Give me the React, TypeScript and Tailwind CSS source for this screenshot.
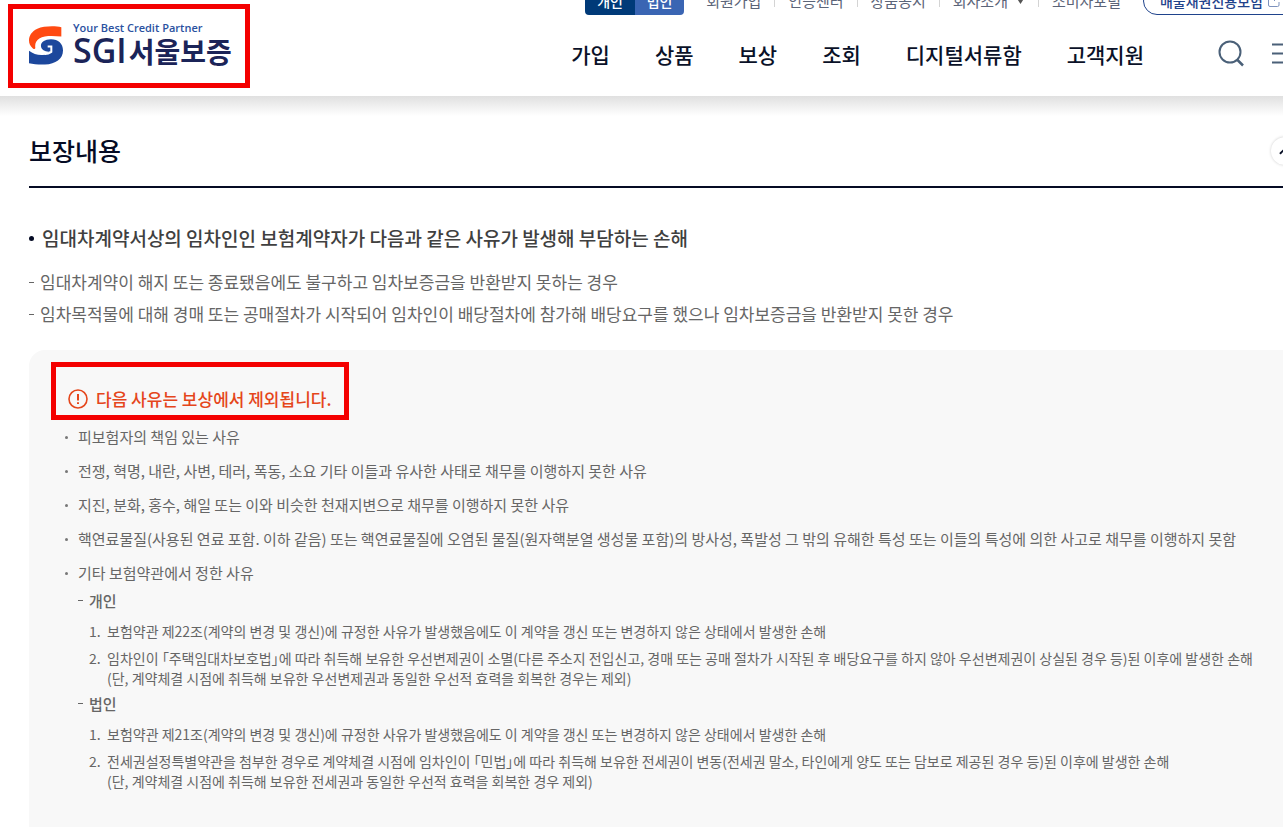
import { ChevronUp } from 'lucide-react'

type ClauseGroup = {
  title: string,
  clauses: string[][],
}

const menus = ['가입', '상품', '보상', '조회', '디지털서류함', '고객지원']

const utilLinks = [
  { label: '회원가입' },
  { label: '인증센터' },
  { label: '상품공시' },
  { label: '회사소개', hasMenu: true },
  { label: '소비자포털' },
]

const coverages = [
  '임대차계약이 해지 또는 종료됐음에도 불구하고 임차보증금을 반환받지 못하는 경우',
  '임차목적물에 대해 경매 또는 공매절차가 시작되어 임차인이 배당절차에 참가해 배당요구를 했으나 임차보증금을 반환받지 못한 경우',
]

const exclusions = [
  '피보험자의 책임 있는 사유',
  '전쟁, 혁명, 내란, 사변, 테러, 폭동, 소요 기타 이들과 유사한 사태로 채무를 이행하지 못한 사유',
  '지진, 분화, 홍수, 해일 또는 이와 비슷한 천재지변으로 채무를 이행하지 못한 사유',
  '핵연료물질(사용된 연료 포함. 이하 같음) 또는 핵연료물질에 오염된 물질(원자핵분열 생성물 포함)의 방사성, 폭발성 그 밖의 유해한 특성 또는 이들의 특성에 의한 사고로 채무를 이행하지 못함',
  '기타 보험약관에서 정한 사유',
]

const clauseGroups: ClauseGroup[] = [
  {
    title: '개인',
    clauses: [
      ['보험약관 제22조(계약의 변경 및 갱신)에 규정한 사유가 발생했음에도 이 계약을 갱신 또는 변경하지 않은 상태에서 발생한 손해'],
      [
        '임차인이 「주택임대차보호법」에 따라 취득해 보유한 우선변제권이 소멸(다른 주소지 전입신고, 경매 또는 공매 절차가 시작된 후 배당요구를 하지 않아 우선변제권이 상실된 경우 등)된 이후에 발생한 손해',
        '(단, 계약체결 시점에 취득해 보유한 우선변제권과 동일한 우선적 효력을 회복한 경우는 제외)',
      ],
    ],
  },
  {
    title: '법인',
    clauses: [
      ['보험약관 제21조(계약의 변경 및 갱신)에 규정한 사유가 발생했음에도 이 계약을 갱신 또는 변경하지 않은 상태에서 발생한 손해'],
      [
        '전세권설정특별약관을 첨부한 경우로 계약체결 시점에 임차인이 「민법」에 따라 취득해 보유한 전세권이 변동(전세권 말소, 타인에게 양도 또는 담보로 제공된 경우 등)된 이후에 발생한 손해',
        '(단, 계약체결 시점에 취득해 보유한 전세권과 동일한 우선적 효력을 회복한 경우 제외)',
      ],
    ],
  },
]

const Logo = () => (
  <a
    href="#"
    className="ml-2 mt-1 flex h-[84px] w-[242px] shrink-0 items-start border-[5px] border-[#f40000] pl-4 pt-3"
  >
    <svg viewBox="0 0 102 116" className="mt-[5px] h-[39px] w-[34px] shrink-0" aria-hidden="true">
      <path
        d="M97 3 C78 -1 44 -1 25 8 C8 16 0 29 0 43 C0 53 4 60 11 66 C16 70 19 69 19 65 C17 54 21 43 31 37 C46 28 70 29 97 31 Z"
        fill="#ff4a12"
      />
      <path
        d="M0 74 C13 84 29 88 45 86 L64 76 C50 78 38 72 36 61 C34 48 48 39 66 39 C88 39 102 52 102 73 C102 98 80 114 48 115 C31 116 14 114 0 111 Z"
        fill="#1c479c"
      />
      <path d="M26 72 C38 86 54 86 67 77 V61 H56" fill="none" stroke="#fff" strokeWidth="6"/>
    </svg>
    <span className="ml-[10px] flex flex-col whitespace-nowrap">
      <span className="font-['Open_Sans'] text-[11px] font-semibold leading-[14px] text-[#2a519f]">
        Your Best Credit Partner
      </span>
      <span className="flex items-baseline gap-[2px] text-[28px] font-bold leading-[30px] text-[#1b2458]">
        <span className="font-['Open_Sans'] text-[34px] font-semibold leading-[30px]">SGI</span>
        서울보증
      </span>
    </span>
  </a>
)

const UtilBar = () => (
  <div className="flex h-[15px] items-end justify-end overflow-hidden whitespace-nowrap text-[15px] text-[#5b6478]">
    <div className="flex h-7 overflow-hidden rounded-b text-[14px] font-medium text-white">
      <button type="button" className="w-[50px] bg-[#003a78]">개인</button>
      <button type="button" className="w-[49px] bg-[#3a65b3]">법인</button>
    </div>
    <ul className="mx-[22px] flex h-7 items-center">
      {utilLinks.map((link, index) => (
        <li key={link.label} className="flex items-center">
          {index > 0 && <span className="mx-[13px] h-3 w-px bg-[#d4d4d4]"/>}
          <a href="#">{link.label}</a>
          {link.hasMenu && (
            <svg viewBox="0 0 9 8" className="ml-2 h-2 w-[9px]" aria-hidden="true">
              <path d="M0 0 H9 L4.500 7 Z" fill="#555"/>
            </svg>
          )}
        </li>
      ))}
    </ul>
    <a
      href="#"
      className="-mr-[15px] flex h-7 items-center rounded-full border border-[#1f438c] px-4 text-[14px] font-medium text-[#1f438c]"
    >
      매출채권신용보험
      <svg viewBox="0 0 14 14" className="ml-1 size-[14px]" fill="none" stroke="#7d92bd" aria-hidden="true">
        <path d="M6 2 H3 Q1.500 2 1.500 3.500 V11 Q1.500 12.500 3 12.500 H10.500 Q12 12.500 12 11 V8 M8.500 1.500 H12.500 V5.500 M12.500 1.500 L7 7"/>
      </svg>
    </a>
  </div>
)

const Header = () => (
  <header className="flex h-24 justify-between bg-white">
    <Logo/>
    <div className="flex flex-col">
      <UtilBar/>
      <div className="flex flex-1 items-center justify-end pb-1">
        <nav className="flex gap-[45px] whitespace-nowrap text-[21px] font-medium leading-[30px] text-[#0a1128]">
          {menus.map(menu => <a key={menu} href="#">{menu}</a>)}
        </nav>
        <button type="button" aria-label="검색" className="ml-[73px]">
          <svg viewBox="0 0 28 28" className="size-7" fill="none" stroke="#4a6078" strokeWidth="2">
            <circle cx="13" cy="12" r="10.500"/>
            <path d="M20 19.500 L26 25.500" strokeWidth="2.500"/>
          </svg>
        </button>
        <button type="button" aria-label="전체메뉴" className="-mr-4 ml-[26px]">
          <svg viewBox="0 0 28 28" className="size-7" stroke="#4a6078" strokeWidth="2">
            <path d="M1 4.500 H27 M1 13.500 H27 M1 22.500 H27"/>
          </svg>
        </button>
      </div>
    </div>
  </header>
)

const WarningTitle = () => (
  <h3
    className="ml-[22px] flex h-[58px] w-[298px] items-end gap-2 whitespace-nowrap border-[5px] border-[#f40000] pb-[3px] pl-3 text-[17px] font-medium leading-[26px] text-[#e5461b]"
  >
    <svg viewBox="0 0 20 20" className="mb-[3px] size-5" fill="none" stroke="currentColor" aria-hidden="true">
      <circle cx="10" cy="10" r="9" strokeWidth="1.600"/>
      <path d="M10 5 V11.500 M10 13.200 V15" strokeWidth="2"/>
    </svg>
    다음 사유는 보상에서 제외됩니다.
  </h3>
)

const ClauseSection = ({ title, clauses }: ClauseGroup) => (
  <div className="mt-[6px] pl-[11px]">
    <p className="relative text-[15px] font-medium leading-5">
      <span className="absolute -left-[11px] top-[9px] h-px w-[5px] bg-[#666]"/>
      {title}
    </p>
    {/* palt keeps the 「」 brackets from taking a full em */}
    <ol className="mt-[10px] flex flex-col gap-[7px] text-[14px] leading-5 [font-feature-settings:'palt']">
      {clauses.map((lines, index) => (
        <li key={lines[0]} className="flex">
          <span className="w-[18px] shrink-0">{index + 1}.</span>
          <span>
            {lines.map(line => <span key={line} className="block">{line}</span>)}
          </span>
        </li>
      ))}
    </ol>
  </div>
)

export default function App() {
  return (
    <div className="min-h-screen overflow-hidden bg-white font-['Noto_Sans_CJK_KR',sans-serif] text-[#666]">
      <Header/>
      <div className="h-5 bg-linear-to-b from-[#e0e0e0] to-white"/>
      <main className="pl-[29px]">
        <div className="flex h-[72px] items-center justify-between border-b-2 border-[#050b24]">
          <h2 className="text-[25px] font-medium text-[#050b24]">보장내용</h2>
          <button
            type="button"
            aria-label="접기"
            className="-mr-4 flex size-7 items-center justify-center rounded-full bg-white text-[#0a1128] shadow-[0_0_3px_rgba(0,0,0,0.2)]"
          >
            <ChevronUp size={18} strokeWidth={2.5}/>
          </button>
        </div>

        <p className="mt-9 flex items-center gap-2 text-[19px] font-medium leading-7 text-[#404040]">
          <span className="size-[5px] rounded-full bg-[#050b24]"/>
          임대차계약서상의 임차인인 보험계약자가 다음과 같은 사유가 발생해 부담하는 손해
        </p>
        <ul className="mt-[14px] text-[17px] leading-8">
          {coverages.map(coverage => (
            <li key={coverage} className="flex items-center gap-[6px]">
              <span className="h-px w-[5px] bg-[#666]"/>
              {coverage}
            </li>
          ))}
        </ul>

        <section className="mt-5 rounded-l-2xl bg-[#f8f8f8] pb-16 pt-3">
          <WarningTitle/>
          <ul className="mt-[5px] flex flex-col gap-[10px] whitespace-nowrap pl-9 text-[15px] leading-6">
            {exclusions.map((exclusion, index) => (
              <li key={exclusion}>
                <div className="flex items-center gap-[10px]">
                  <span className="size-[3px] rounded-full bg-[#777]"/>
                  {exclusion}
                </div>
                {index === exclusions.length - 1 && (
                  <div className="pl-[13px]">
                    {clauseGroups.map(group => <ClauseSection key={group.title} {...group}/>)}
                  </div>
                )}
              </li>
            ))}
          </ul>
        </section>
      </main>
    </div>
  )
}
